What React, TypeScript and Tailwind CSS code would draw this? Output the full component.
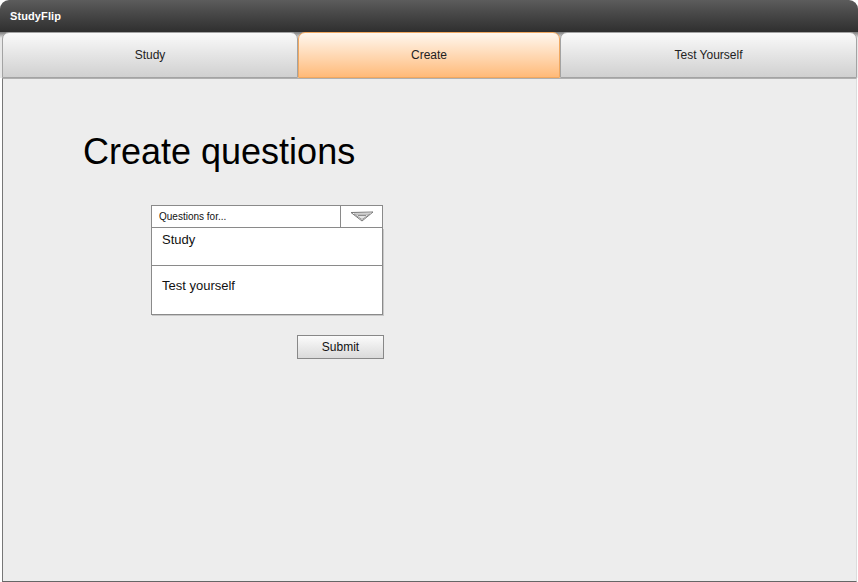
import React from "react";

const font = { fontFamily: '"Liberation Sans", Arial, sans-serif' };

export default function App() {
  return (
    <div className="w-[858px] h-[582px] bg-white overflow-hidden flex flex-col" style={font}>
      <div className="h-[32px] shrink-0 rounded-t-[9px] bg-gradient-to-b from-[#5c5c5c] to-[#2f2f2f] flex items-center pl-[10px]">
        <span className="text-white font-bold text-[11px] tracking-[0.1px]">StudyFlip</span>
      </div>
      <div className="flex h-[46px] shrink-0 pl-[2px] pr-[1px] bg-[linear-gradient(#7a7a7a_0px,#e8e8e8_6px)]">
        <div className="w-[296px] rounded-t-[7px] border border-[#a3a3a3] bg-gradient-to-b from-[#fafafa] to-[#d0d0d0] flex items-center justify-center text-[12px] text-[#222]">
          Study
        </div>
        <div className="w-[262px] rounded-t-[7px] border border-[#f0a860] bg-gradient-to-b from-[#fff7ee] to-[#ffba78] flex items-center justify-center text-[12px] text-[#222]">
          Create
        </div>
        <div className="flex-1 rounded-t-[7px] border border-[#a3a3a3] bg-gradient-to-b from-[#fafafa] to-[#d0d0d0] flex items-center justify-center text-[12px] text-[#222]">
          Test Yourself
        </div>
      </div>
      <div className="flex-1 ml-[2px] mr-[1px] bg-[#ededed] border-l border-b border-l-[#777] border-b-[#666] border-r border-r-[#dcdcdc] border-t border-t-[#b0b0b0]">
        <div className="pl-[80px] pt-[53px]">
          <h1 className="text-[36px] leading-[40px] text-black">Create questions</h1>
        </div>
        <div className="pl-[148px] pt-[33px] w-[384px]">
          <div className="flex flex-col w-[232px]">
            <div className="h-[23px] flex bg-white border border-[#8a8a8a]">
              <div className="flex-1 flex items-center pl-[7px] text-[10px] text-[#111]">Questions for...</div>
              <div className="w-[42px] border-l border-[#8a8a8a] flex items-center justify-center">
                <svg width="24" height="11" viewBox="0 0 24 11">
                  <path d="M1 1.5 L23 1 L12 10 Z" fill="none" stroke="#777" strokeWidth="1" />
                  <path d="M4 3 L20 3 L12 8.5 Z" fill="#e5e5e5" stroke="#888" strokeWidth="0.8" />
                  <path d="M8 4.5 L16 4.5" stroke="#777" strokeWidth="0.8" />
                </svg>
              </div>
            </div>
            <div className="bg-white border border-t-0 border-[#8a8a8a] shadow-[1px_1px_0_#c8c8c8]">
              <div className="h-[38px] border-b border-[#8a8a8a] pl-[10px] pt-[2px] text-[13px] text-[#111]">Study</div>
              <div className="h-[48px] pl-[10px] pt-[10px] text-[13px] text-[#111]">Test yourself</div>
            </div>
          </div>
          <div className="flex justify-end mt-[20px] w-[233px]">
            <button className="w-[87px] h-[24px] border border-[#888] bg-gradient-to-b from-[#fbfbfb] to-[#dadada] text-[12px] text-[#111] flex items-center justify-center">
              Submit
            </button>
          </div>
        </div>
      </div>
    </div>
  );
}
